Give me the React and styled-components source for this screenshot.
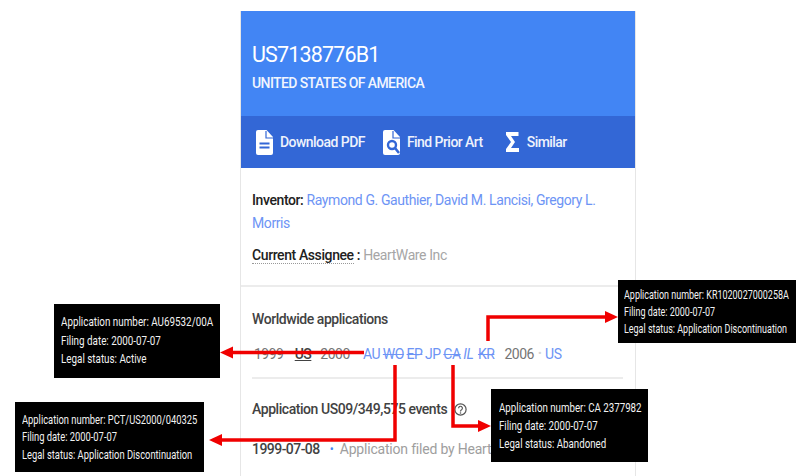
import React from 'react';
import styled, { createGlobalStyle } from 'styled-components';

const Global = createGlobalStyle`
  html, body { margin: 0; padding: 0; background: #fff; }
  body { font-family: Roboto, "Liberation Sans", sans-serif; }
`;

const Page = styled.div`
  position: relative;
  width: 806px;
  height: 476px;
  overflow: hidden;
  padding: 11px 0 0 240px;
  box-sizing: border-box;
`;

const Card = styled.div`
  width: 396px;
  height: 465px;
  box-sizing: border-box;
  border-left: 1px solid #e6e6e6;
  border-right: 1px solid #e6e6e6;
  overflow: hidden;
`;

const Header = styled.div`
  height: 105px;
  box-sizing: border-box;
  margin: 0 -1px;
  padding: 30px 12px 0 12px;
  background: #4285f4;
  color: #fff;
`;

const PatentNumber = styled.div`
  font-size: 21.5px;
  line-height: 28px;
  letter-spacing: -0.85px;
`;

const Country = styled.div`
  margin-top: 5px;
  font-size: 14px;
  line-height: 18px;
  letter-spacing: -0.6px;
  font-weight: 500;
  color: #f1f5fe;
`;

const ActionBar = styled.div`
  height: 52px;
  margin: 0 -1px;
  padding-left: 16px;
  display: flex;
  align-items: center;
  background: #3367d6;
  color: #eef2fc;
`;

const Action = styled.div`
  display: flex;
  align-items: center;
  gap: ${(p) => p.$gap}px;
  margin-right: ${(p) => p.$after || 0}px;
  font-size: 14px;
  letter-spacing: -0.55px;
  font-weight: 500;
`;

const MetaSection = styled.div`
  height: 119px;
  box-sizing: border-box;
  padding: 21px 22px 0 11px;
  border-bottom: 2px solid #ececec;
`;

const Meta = styled.div`
  font-size: 14px;
  line-height: 23px;
  letter-spacing: -0.4px;
  margin-bottom: ${(p) => p.$after || 0}px;
  color: #a6a6a6;
`;

const Label = styled.span`
  color: #212121;
  font-weight: 500;
  border-bottom: ${(p) => (p.$dotted ? '1px dotted #999' : 'none')};
`;

const Link = styled.span`
  color: #6d94f5;
`;

const Worldwide = styled.div`
  margin: 0 12px 0 11px;
  height: 92px;
  box-sizing: border-box;
  padding-top: 22px;
  border-bottom: 2px solid #ececec;
`;

const Heading = styled.div`
  font-size: 14px;
  line-height: 20px;
  letter-spacing: -0.45px;
  font-weight: 500;
  color: #424242;
`;

const Timeline = styled.div`
  margin-top: 15px;
  padding-left: 2px;
  display: flex;
  align-items: center;
  font-size: 14px;
  line-height: 20px;
  letter-spacing: -0.5px;
  color: #757575;
`;

const Year = styled.span`
  margin-left: ${(p) => p.$before || 0}px;
  margin-right: ${(p) => p.$after || 0}px;
`;

const Dot = styled.span`
  margin: 0 4px;
  color: #d5d5d5;
  font-size: 11px;
`;

const Region = styled.span`
  color: #6d94f5;
  margin-right: ${(p) => p.$after ?? 2.7}px;
  text-decoration: ${(p) => (p.$dead ? 'line-through' : 'none')};
  font-style: ${(p) => (p.$italic ? 'italic' : 'normal')};
`;

const CurrentRegion = styled.span`
  color: #424242;
  font-weight: 500;
  text-decoration: underline;
`;

const Events = styled.div`
  margin: 0 11px;
  padding-top: 20px;
`;

const EventsTitle = styled.div`
  display: flex;
  align-items: center;
  gap: 7px;
  font-size: 14px;
  line-height: 20px;
  letter-spacing: -0.45px;
  font-weight: 500;
  color: #424242;
`;

const EventRow = styled.div`
  margin-top: 20px;
  display: flex;
  align-items: center;
  font-size: 14px;
  line-height: 20px;
  white-space: nowrap;
`;

const EventDate = styled.span`
  color: #424242;
  font-weight: 500;
  letter-spacing: -0.55px;
`;

const EventDot = styled.span`
  margin: 0 6px 0 10px;
  color: #4285f4;
  font-size: 12px;
`;

const EventText = styled.span`
  color: #9e9e9e;
  letter-spacing: -0.2px;
`;

const Callout = styled.div`
  position: absolute;
  left: ${(p) => p.$x}px;
  top: ${(p) => p.$y}px;
  width: ${(p) => p.$w}px;
  height: ${(p) => p.$h}px;
  box-sizing: border-box;
  padding-left: ${(p) => p.$pad}px;
  display: flex;
  flex-direction: column;
  justify-content: center;
  background: #000;
  color: #f2f2f2;
  font-size: 13px;
  line-height: ${(p) => p.$lead}px;
  white-space: nowrap;
`;

const CalloutLine = styled.div`
  width: fit-content;
  transform: scaleX(${(p) => p.$squeeze});
  transform-origin: left center;
`;

const Arrows = styled.svg`
  position: absolute;
  left: 0;
  top: 0;
`;

const DocIcon = () => (
  <svg width="17" height="25" viewBox="0 0 17 25">
    <path d="M2 0H10.500L17 7V23a2 2 0 0 1-2 2H2a2 2 0 0 1-2-2V2a2 2 0 0 1 2-2Z" fill="#fff" />
    <path d="M10 1V8H17" fill="none" stroke="#3367d6" strokeWidth="1.2" />
    <path d="M3.500 13.500H13.500M3.500 17.500H13.500" stroke="#3367d6" strokeWidth="2" />
  </svg>
);

const PriorArtIcon = () => (
  <svg width="17" height="25" viewBox="0 0 17 25">
    <path d="M2 0H10.500L17 7V23a2 2 0 0 1-2 2H2a2 2 0 0 1-2-2V2a2 2 0 0 1 2-2Z" fill="#fff" />
    <path d="M10 1V8H17" fill="none" stroke="#3367d6" strokeWidth="1.2" />
    <circle cx="9" cy="15" r="4" fill="#fff" stroke="#3367d6" strokeWidth="2.4" />
    <path d="M12 18L16 23" stroke="#3367d6" strokeWidth="2.6" />
  </svg>
);

const SigmaIcon = () => (
  <svg width="13" height="20" viewBox="0 0 13 20">
    <path d="M0 0H12.500V4H5L9 10L5 16H13V20H0V17L5 10L0 3Z" fill="#fff" />
  </svg>
);

const HelpIcon = () => (
  <svg width="13" height="13" viewBox="0 0 13 13">
    <circle cx="6.500" cy="6.500" r="5.600" fill="none" stroke="#555" strokeWidth="1.2" />
    <path d="M4.600 5.200a1.900 1.900 0 1 1 2.900 1.600c-.7.4-1 .8-1 1.600" fill="none" stroke="#555" strokeWidth="1.2" />
    <circle cx="6.500" cy="10" r=".8" fill="#555" />
  </svg>
);

const callouts = [
  { x: 54, y: 304, w: 166, h: 74, pad: 7, lead: 18.5, squeeze: 0.757, lines: ['Application number: AU69532/00A', 'Filing date: 2000-07-07', 'Legal status: Active'] },
  { x: 15, y: 402, w: 189, h: 70, pad: 7, lead: 17.5, squeeze: 0.72, lines: ['Application number: PCT/US2000/040325', 'Filing date: 2000-07-07', 'Legal status: Application Discontinuation'] },
  { x: 491, y: 389, w: 157, h: 73, pad: 8, lead: 18, squeeze: 0.748, lines: ['Application number: CA 2377982', 'Filing date: 2000-07-07', 'Legal status: Abandoned'] },
  { x: 618, y: 280, w: 178, h: 63, pad: 6, lead: 17, squeeze: 0.69, lines: ['Application number: KR1020027000258A', 'Filing date: 2000-07-07', 'Legal status: Application Discontinuation'] },
];

export default function App() {
  return (
    <Page>
      <Global />
      <Card>
        <Header>
          <PatentNumber>US7138776B1</PatentNumber>
          <Country>UNITED STATES OF AMERICA</Country>
        </Header>
        <ActionBar>
          <Action $gap={7} $after={18}><DocIcon />Download PDF</Action>
          <Action $gap={7} $after={23}><PriorArtIcon />Find Prior Art</Action>
          <Action $gap={8}><SigmaIcon />Similar</Action>
        </ActionBar>
        <MetaSection>
          <Meta $after={9}>
            <Label>Inventor:</Label>{' '}
            <Link>Raymond G. Gauthier, David M. Lancisi, Gregory L. Morris</Link>
          </Meta>
          <Meta>
            <Label $dotted>Current Assignee</Label><Label> :</Label> HeartWare Inc
          </Meta>
        </MetaSection>
        <Worldwide>
          <Heading>Worldwide applications</Heading>
          <Timeline>
            <Year>1999</Year>
            <Dot>•</Dot>
            <CurrentRegion>US</CurrentRegion>
            <Year $before={9} $after={2}>2000</Year>
            <Dot>•</Dot>
            <Region>AU</Region>
            <Region $dead>WO</Region>
            <Region $dead>EP</Region>
            <Region>JP</Region>
            <Region $dead>CA</Region>
            <Region $italic $after={4.7}>IL</Region>
            <Region $dead $after={10}>KR</Region>
            <Year>2006</Year>
            <Dot>•</Dot>
            <Region>US</Region>
          </Timeline>
        </Worldwide>
        <Events>
          <EventsTitle>Application US09/349,575 events <HelpIcon /></EventsTitle>
          <EventRow>
            <EventDate>1999-07-08</EventDate>
            <EventDot>•</EventDot>
            <EventText>Application filed by HeartWare Inc</EventText>
          </EventRow>
        </Events>
      </Card>

      <Arrows width="806" height="476" viewBox="0 0 806 476">
        <g fill="none" stroke="#f00000" strokeWidth="3.5">
          <path d="M488 341V317H606" />
          <path d="M364 352.500H231" />
          <path d="M395 365V440H221" />
          <path d="M453 365V426H479" />
        </g>
        <g fill="#f00000">
          <path d="M618 317L605 311V323Z" />
          <path d="M220 352.500L233 346.500V358.500Z" />
          <path d="M209 440L222 434V446Z" />
          <path d="M491 426L478 420V432Z" />
        </g>
      </Arrows>

      {callouts.map((c) => (
        <Callout key={c.lines[0]} $x={c.x} $y={c.y} $w={c.w} $h={c.h} $pad={c.pad} $lead={c.lead}>
          {c.lines.map((l) => <CalloutLine key={l} $squeeze={c.squeeze}>{l}</CalloutLine>)}
        </Callout>
      ))}
    </Page>
  );
}
